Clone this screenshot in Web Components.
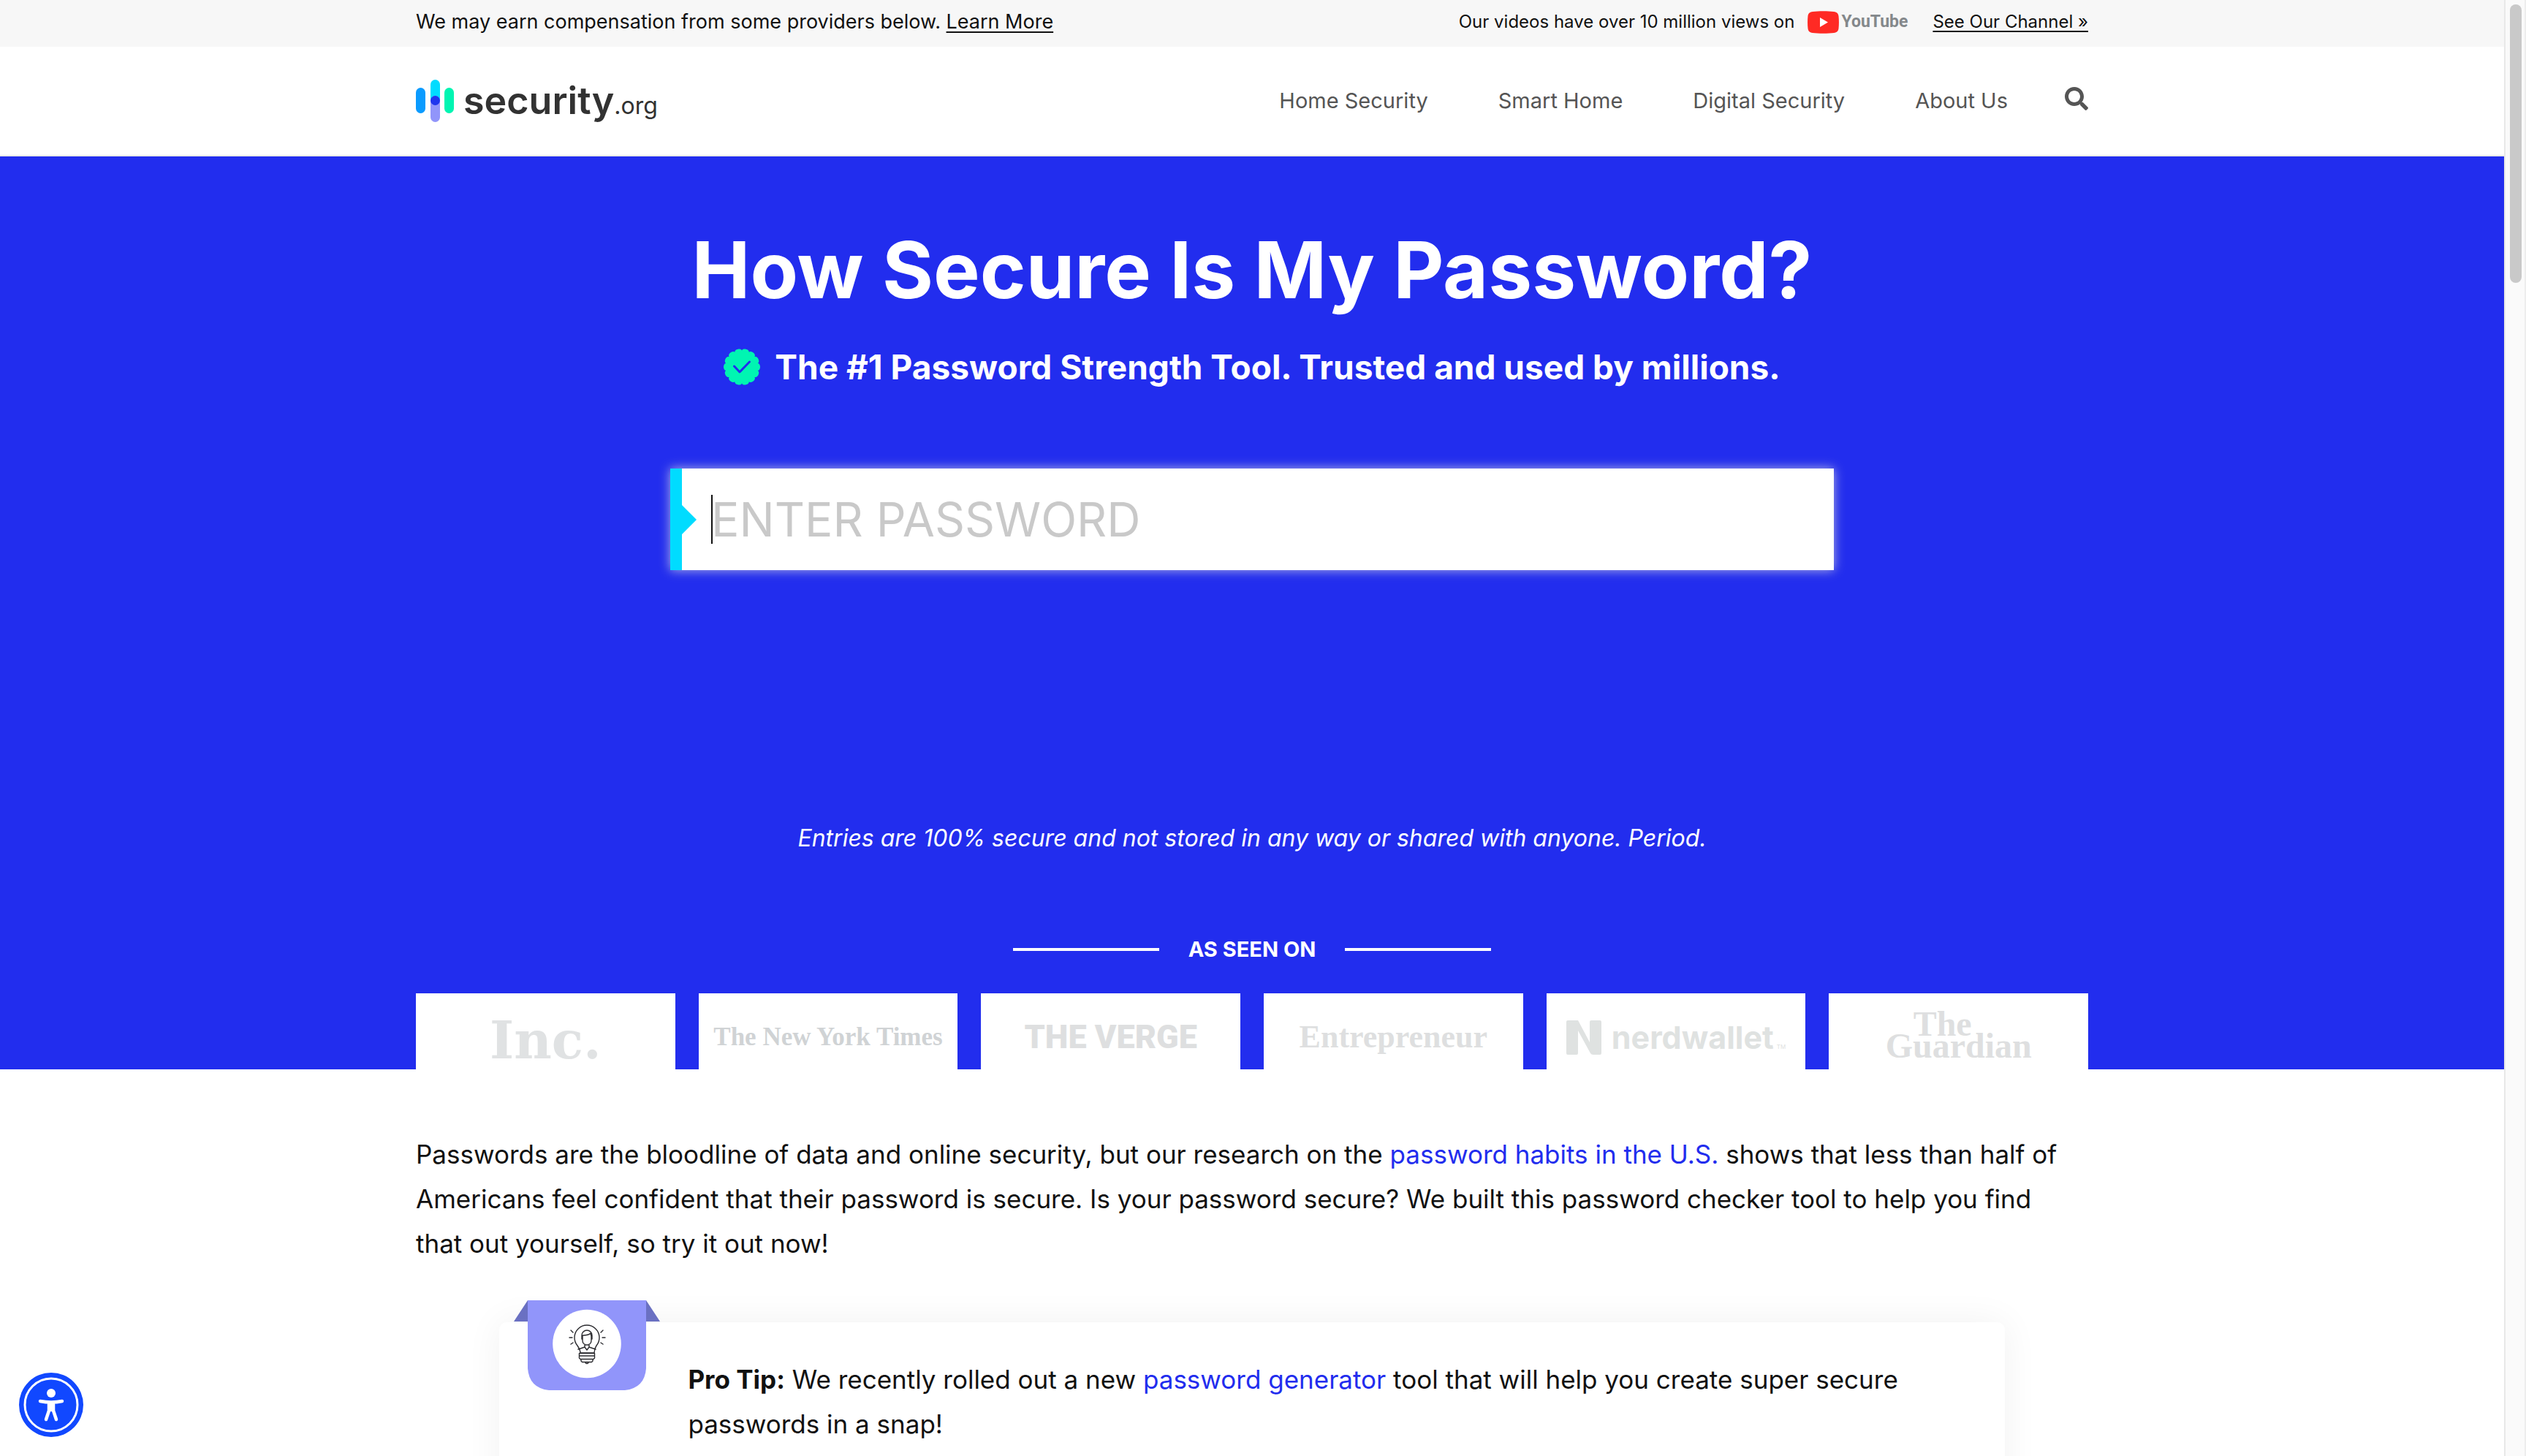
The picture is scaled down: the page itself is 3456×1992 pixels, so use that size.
<!DOCTYPE html>
<html lang="en">
<head>
<meta charset="utf-8">
<title>How Secure Is My Password? | Security.org</title>
<style>
  html, body { margin: 0; height: 100%; }
  body {
    --blue: #222dee;
    --container: 2288px;
    font-family: Inter, "Open Sans", "Liberation Sans", sans-serif;
    color: #111;
    background: #fff;
    overflow: hidden;
  }
</style>
</head>
<body>
<page-shell>
  <top-bar></top-bar>
  <site-header>
    <a href="#home-security">Home Security</a>
    <a href="#smart-home">Smart Home</a>
    <a href="#digital-security">Digital Security</a>
    <a href="#about">About Us</a>
  </site-header>
  <password-hero>
    <span slot="title">How Secure Is My Password?</span>
    <span slot="subtitle">The #1 Password Strength Tool. Trusted and used by millions.</span>
    <password-field slot="field"></password-field>
    <span slot="note">Entries are 100% secure and not stored in any way or shared with anyone. Period.</span>
    <seen-on slot="press"></seen-on>
  </password-hero>
  <article-intro>
    <span>Passwords are the bloodline of data and online security, but our research on the <text-link href="#habits">password habits in the U.S.</text-link> shows that less than half of Americans feel confident that their password is secure. Is your password secure? We built this password checker tool to help you find that out yourself, so try it out now!</span>
    <pro-tip slot="tip"><b>Pro Tip:</b> We recently rolled out a new <text-link href="#generator">password generator</text-link> tool that will help you create super secure passwords in a snap!</pro-tip>
  </article-intro>
  <access-button slot="overlay"></access-button>
</page-shell>

<script>
const define = (name, html, setup) => {
  const template = document.createElement('template');
  template.innerHTML = html;
  customElements.define(name, class extends HTMLElement {
    constructor() {
      super();
      this.attachShadow({ mode: 'open' }).append(template.content.cloneNode(true));
    }
    connectedCallback() { if (setup) setup(this, this.shadowRoot); }
  });
};

define('page-shell', `
<style>
  :host { display: flex; height: 100vh; overflow: hidden; }
  main { flex: 1; min-width: 0; overflow: hidden; }
  .track { width: 26px; border-left: 2px solid #e8e8e8; border-right: 2px solid #ededed; background: #fafafa; padding-top: 6px; box-sizing: content-box; }
  .thumb { width: 16px; height: 381px; margin-left: 6px; border-radius: 8px; background: #c9c9c9; }
</style>
<main><slot></slot></main>
<div class="track" aria-hidden="true"><div class="thumb"></div></div>
<slot name="overlay"></slot>`);

define('top-bar', `
<style>
  :host { display: block; background: #f7f7f7; }
  .row { max-width: var(--container); margin: 0 auto; height: 64px; display: flex; align-items: center; justify-content: space-between; font-size: 27px; line-height: 32px; padding-bottom: 4px; box-sizing: border-box; }
  .right { display: flex; align-items: center; font-size: 24px; }
  a { color: inherit; text-underline-offset: 4px; text-decoration-thickness: 2px; }
  youtube-logo { margin: 0 34px 0 18px; }
</style>
<div class="row">
  <span>We may earn compensation from some providers below. <a href="#disclosure">Learn More</a></span>
  <span class="right"><span>Our videos have over 10 million views on</span><youtube-logo></youtube-logo><a href="#channel">See Our Channel »</a></span>
</div>`);

define('youtube-logo', `
<style>
  :host { display: flex; align-items: center; gap: 3px; color: #84888b; font: 700 23px/32px Roboto, "Liberation Sans", sans-serif; }
  svg { display: block; width: 43px; height: 31px; }
</style>
<svg viewBox="0 0 43 31" aria-hidden="true"><path fill="#ff2a24" d="M7 1C14-.1 29-.1 36 1c4.500.6 6 2.500 6.500 6 .6 5 .6 12 0 17-.5 3.500-2 5.400-6.500 6-7 1.100-22 1.100-29 0-4.500-.6-6-2.500-6.500-6-.6-5-.6-12 0-17C1 3.500 2.500 1.600 7 1z"/><path fill="#fff" d="M17 9v13l11-6.500z"/></svg><span>YouTube</span>`);

define('site-header', `
<style>
  :host { display: block; border-bottom: 2px solid #e9ebe9; background: #fff; }
  .row { max-width: var(--container); margin: 0 auto; height: 148px; display: flex; align-items: center; justify-content: space-between; }
  .end { display: flex; align-items: center; gap: 78px; }
  nav { display: flex; gap: 96px; }
  ::slotted(a) { color: #555; text-decoration: none; font-size: 29px; line-height: 36px; }
  button { border: 0; padding: 0 0 6px; background: none; display: block; color: #555; }
  button svg { display: block; width: 32px; height: 32px; }
</style>
<div class="row">
  <brand-logo></brand-logo>
  <div class="end">
    <nav aria-label="Main"><slot></slot></nav>
    <button type="button" aria-label="Search"><svg viewBox="0 0 512 512" fill="currentColor" aria-hidden="true"><path d="M505 442.700L405.300 343c-4.500-4.500-10.600-7-17-7H372c27.600-35.300 44-79.700 44-128C416 93.100 322.900 0 208 0S0 93.100 0 208s93.100 208 208 208c48.300 0 92.700-16.400 128-44v16.300c0 6.400 2.500 12.500 7 17l99.700 99.700c9.400 9.400 24.600 9.400 33.900 0l28.300-28.300c9.400-9.400 9.400-24.600.1-34zM208 336c-70.700 0-128-57.200-128-128 0-70.700 57.200-128 128-128 70.700 0 128 57.200 128 128 0 70.700-57.200 128-128 128z"/></svg></button>
  </div>
</div>`);

define('brand-logo', `
<style>
  :host { display: block; }
  a { display: flex; align-items: center; gap: 12px; color: #323232; text-decoration: none; }
  svg { display: block; width: 53px; height: 58px; }
  .name { font-size: 52px; font-weight: 600; line-height: 52px; padding-top: 6px; }
  small { font-size: 32px; font-weight: 400; }
</style>
<a href="#home" aria-label="security.org">
  <svg viewBox="0 0 53 58" aria-hidden="true"><rect y="11" width="13" height="35" rx="6.500" fill="#0a9bff"/><rect x="20" width="13" height="34" rx="6.500" fill="#00dcff"/><rect x="20" y="22" width="13" height="36" rx="6.500" fill="#9195fa"/><rect x="20" y="22" width="13" height="13" rx="6.500" fill="#1f35ee"/><rect x="39" y="11" width="13" height="35" rx="6.500" fill="#00f5b2"/></svg>
  <span class="name">security<small>.org</small></span>
</a>`);

define('password-hero', `
<style>
  :host { display: block; background: var(--blue); color: #fff; }
  .wrap { max-width: var(--container); margin: 0 auto; padding-top: 100px; display: flex; flex-direction: column; align-items: center; }
  h1 { margin: 0; font-size: 107px; line-height: 110px; font-weight: 700; }
  h2 { margin: 48px 0 0; display: flex; align-items: center; gap: 20px; font-size: 46px; line-height: 60px; font-weight: 700; }
  h2 svg { display: block; width: 50px; height: 50px; }
  slot[name="field"] { display: block; margin-top: 109px; width: 1592px; max-width: 100%; }
  p { margin: 347px 0 112px; font-size: 32px; line-height: 40px; font-style: italic; }
  slot[name="press"] { display: block; align-self: stretch; }
</style>
<div class="wrap">
  <h1><slot name="title"></slot></h1>
  <h2><svg viewBox="-25 -25 50 50" aria-hidden="true"><path class="seal" fill="#00f5b2"/><path d="M-10.500-1l7.500 8 13.500-14" fill="none" stroke="#222dee" stroke-width="3" stroke-linecap="round" stroke-linejoin="round"/></svg><slot name="subtitle"></slot></h2>
  <slot name="field"></slot>
  <p><slot name="note"></slot></p>
  <slot name="press"></slot>
</div>`, (host, root) => {
  // scalloped outline of the verification seal
  const points = [];
  for (let i = 0; i < 168; i++) {
    const a = i / 168 * Math.PI * 2;
    const r = 22.4 + 2.6 * Math.sqrt(Math.abs(Math.cos(a * 7)));
    points.push((r * Math.cos(a)).toFixed(2) + ' ' + (r * Math.sin(a)).toFixed(2));
  }
  root.querySelector('.seal').setAttribute('d', 'M' + points.join('L') + 'z');
});

define('password-field', `
<style>
  :host { display: block; position: relative; box-shadow: 0 0 14px rgba(205, 205, 225, .85); background: #fff; border-left: 16px solid #00dcff; }
  input { display: block; width: 100%; box-sizing: border-box; height: 139px; border: 0; outline: 0; border-radius: 0; background: none; padding: 0 40px; font: 400 64px/72px Inter, "Open Sans", sans-serif; color: #111; caret-color: transparent; }
  input::placeholder { color: #c9c9c9; opacity: 1; text-transform: uppercase; }
  .arrow { position: absolute; left: 0; top: 50%; margin-top: -20px; border: 20px solid transparent; border-left-color: #00dcff; border-right-width: 0; }
  .caret { position: absolute; left: 40px; top: 50%; margin-top: -34px; width: 2px; height: 67px; background: #111; }
</style>
<input type="text" aria-label="Enter password" placeholder="Enter Password" autocomplete="off">
<span class="arrow"></span><span class="caret"></span>`);

define('seen-on', `
<style>
  :host { display: block; }
  .label { display: flex; align-items: center; justify-content: center; gap: 40px; font-size: 29px; line-height: 40px; font-weight: 700; }
  .label::before, .label::after { content: ""; width: 200px; height: 4px; background: #fff; }
  .cards { margin-top: 40px; display: grid; grid-template-columns: repeat(6, 1fr); gap: 32px; }
  .card { background: #fff; height: 104px; display: flex; align-items: center; justify-content: center; color: #dedfe0; white-space: nowrap; padding-top: 16px; box-sizing: border-box; }
  .inc { font: 700 71px/70px "DejaVu Serif", serif; color: #e0e2e3; padding-top: 24px; }
  .nyt { font: 700 35px/48px "Liberation Serif", serif; color: #d0d3d5; }
  .verge { font: 900 45px/60px Roboto, "Liberation Sans", sans-serif; }
  .ent { font: 700 44px/60px "Liberation Serif", serif; }
  .nerd { font-size: 43px; line-height: 48px; font-weight: 700; color: #dfe2e1; display: flex; align-items: center; gap: 14px; }
  .nerd svg { display: block; width: 48px; height: 47px; }
  .nerd small { font-size: 8px; line-height: 8px; font-weight: 400; margin-left: 4px; }
  .guard { font: 700 48px/30px "Liberation Serif", serif; padding-bottom: 6px; }
  .guard span { display: block; padding-left: 38px; }
</style>
<div class="label"><span>AS SEEN ON</span></div>
<div class="cards">
  <div class="card inc">Inc.</div>
  <div class="card nyt">The New York Times</div>
  <div class="card verge">THE VERGE</div>
  <div class="card ent">Entrepreneur</div>
  <div class="card"><div class="nerd"><svg viewBox="0 0 48 47" aria-hidden="true"><path fill="#dfe2e1" d="M2 0h14l16 30V2q0-2 2-2h12q2 0 2 2v43q0 2-2 2H37q-3 0-4-2L16 14v31q0 2-2 2H2q-2 0-2-2V2q0-2 2-2z"/></svg><span>nerdwallet<small>TM</small></span></div></div>
  <div class="card guard"><div><span>The</span>Guardian</div></div>
</div>`);

define('text-link', `
<style>
  :host { display: inline; }
  a { color: var(--blue); text-decoration: none; }
</style>
<a><slot></slot></a>`, (host, root) => {
  root.querySelector('a').setAttribute('href', host.getAttribute('href'));
});

define('article-intro', `
<style>
  :host { display: block; background: #fff; font-size: 35px; line-height: 61px; }
  .wrap { max-width: var(--container); margin: 0 auto; padding-top: 86px; }
  p { margin: 0 0 77px; padding-right: 24px; }
  slot[name="tip"] { display: block; margin: 0 5%; }
</style>
<div class="wrap"><p><slot></slot></p><slot name="tip"></slot></div>`);

define('pro-tip', `
<style>
  :host { display: block; position: relative; border-radius: 10px; background: #fff; box-shadow: 0 0 50px rgba(0, 0, 0, .06); }
  p { margin: 0; padding: 48px 80px 80px 258px; }
  .ribbon { position: absolute; left: 20px; top: -30px; width: 200px; height: 123px; }
</style>
<svg class="ribbon" viewBox="0 0 200 123" aria-hidden="true">
  <path fill="#6a70c2" d="M19 0L0 29h19zM181 0l19 29h-19z"/>
  <path fill="#9195fa" d="M19 0h162v93q-2 27-29 30H48q-27-3-29-30z"/>
  <circle cx="100" cy="59.500" r="46.800" fill="#fff"/>
  <g fill="none" stroke="#2b2b2f" stroke-width="1.400" stroke-linecap="round" stroke-linejoin="round">
    <path d="M91 72c0-4-2-7-4-10a17 17 0 1 1 26 0c-2 3-3 6-3 10z"/>
    <path d="M89.500 72.500h21V76h-21zM89.500 76v3l1.500 1.500h18l1.500-1.500v-3M92 80.500V83l1.500 1.500h13L108 83v-2.500M98 84.500a2 2 0 0 0 4 0"/>
    <path d="M93 53v-5a7 7 0 0 1 14 0v5M94 48c5 0 9-1 11-3l1 4v6c0 4-3 6-6 6s-6-2-6-6zM97 60v4l-9 3M103 60v4l9 3M97 64l3 4 3-4"/>
    <path d="M76 51h4M121 51h4M78 41l3 3M122 41l-3 3M78 60l3-2M122 60l-3-2"/>
  </g>
</svg>
<p><slot></slot></p>`);

define('access-button', `
<style>
  :host { position: fixed; left: 26px; bottom: 26px; }
  button { display: block; border: 0; padding: 0; background: none; border-radius: 50%; }
  svg { display: block; width: 88px; height: 88px; }
</style>
<button type="button" aria-label="Accessibility options"><svg viewBox="0 0 88 88" aria-hidden="true"><circle cx="44" cy="44" r="44" fill="#1148ff"/><circle cx="44" cy="44" r="36" fill="none" stroke="#fff" stroke-width="3"/><circle cx="44" cy="28" r="6" fill="#fff"/><path d="M29 39q15 3 30 0M44 43v8M41 43v9l-4 12M47 43v9l4 12" fill="none" stroke="#fff" stroke-width="4.500" stroke-linecap="round" stroke-linejoin="round"/><path d="M39 41h10v12h-10z" fill="#fff"/></svg></button>`);
</script>
</body>
</html>
